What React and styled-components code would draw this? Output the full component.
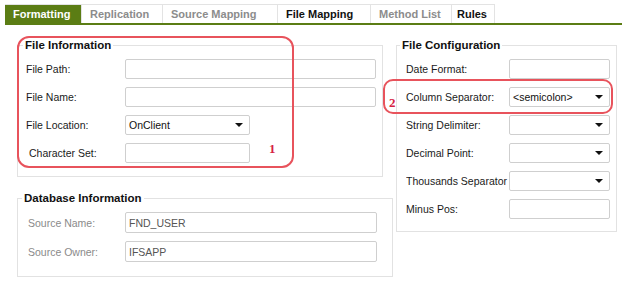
import React from 'react'
import styled, { createGlobalStyle } from 'styled-components'

const Global = createGlobalStyle`
  body {
    margin: 0;
    background: #ffffff;
    font-family: "Liberation Sans", Arial, sans-serif;
    font-size: 10.5px;
    color: #1a1a1a;
  }
`

const Page = styled.div`
  width: 622px;
  height: 283px;
  padding-top: 4px;
  box-sizing: border-box;
`

const TabBar = styled.div`
  display: flex;
  margin-left: 5px;
  border-bottom: 2px solid #5b7d14;
`

const Tab = styled.div`
  height: 19px;
  display: flex;
  align-items: center;
  padding: 0 ${p => p.pad || 8}px;
  box-sizing: border-box;
  font-weight: bold;
  font-size: 11px;
  border: 1px solid #e3e3e3;
  border-bottom: none;
  border-left: none;
  background: ${p => (p.active ? '#5b7d14' : '#ffffff')};
  color: ${p => (p.active ? '#ffffff' : p.dim ? '#8c8c8c' : '#111111')};
  width: ${p => p.w}px;
`

const Body = styled.div`
  display: flex;
  align-items: flex-start;
  padding-left: 17px;
  margin-top: 14px;
`

const LeftColumn = styled.div`
  width: 376px;
  display: flex;
  flex-direction: column;
  gap: 15px;
`

const Group = styled.fieldset`
  position: relative;
  margin: 0;
  width: ${p => p.w}px;
  box-sizing: border-box;
  border: 1px solid #e2e2e2;
  padding: ${p => p.pt || 7}px ${p => p.pr || 6}px ${p => p.pb || 13}px ${p => p.pl || 8}px;
  display: flex;
  flex-direction: column;
  gap: 8px;
`

const Legend = styled.legend`
  font-weight: bold;
  font-size: 11.5px;
  color: #111;
  padding: 0 2px;
  margin-left: ${p => p.ml}px;
  line-height: 13px;
`

const Row = styled.div`
  display: flex;
  align-items: center;
  height: ${p => p.h || 20}px;
`

const Label = styled.div`
  width: ${p => p.w}px;
  flex: none;
  padding-left: ${p => p.indent || 0}px;
  box-sizing: border-box;
  color: ${p => (p.dim ? '#8a8a8a' : '#1a1a1a')};
  white-space: nowrap;
  overflow: hidden;
`

const Field = styled.div`
  width: ${p => p.w}px;
  height: ${p => p.h || 20}px;
  box-sizing: border-box;
  border: 1px solid #cfcfcf;
  border-radius: 2px;
  background: #fff;
  display: flex;
  align-items: center;
  padding: 0 3px;
  color: ${p => (p.dim ? '#555' : '#111')};
`

const Value = styled.span`
  flex: 1;
`

const Arrow = styled.span`
  width: 0;
  height: 0;
  margin-right: 3px;
  border-left: 4px solid transparent;
  border-right: 4px solid transparent;
  border-top: 4px solid #111;
`

// red annotation frames drawn over the form
const Mark = styled.div`
  position: absolute;
  left: ${p => p.x}px;
  top: ${p => p.y}px;
  width: ${p => p.w}px;
  height: ${p => p.h}px;
  border: 2px solid #e8535c;
  border-radius: ${p => p.r}px;
  box-sizing: border-box;
  pointer-events: none;
`

const Number = styled.div`
  position: absolute;
  left: ${p => p.x}px;
  top: ${p => p.y}px;
  color: #d62244;
  font-weight: bold;
  font-size: 13px;
  font-family: "Liberation Serif", serif;
`

const RightGroup = styled(Group)`
  margin-left: 3px;
`

const Select = ({ w, value }) => (
  <Field w={w}>
    <Value>{value}</Value>
    <Arrow />
  </Field>
)

const App = () => (
  <Page>
    <Global />
    <TabBar>
      <Tab active w={77}>Formatting</Tab>
      <Tab dim w={81}>Replication</Tab>
      <Tab dim w={115}>Source Mapping</Tab>
      <Tab w={93}>File Mapping</Tab>
      <Tab dim w={81}>Method List</Tab>
      <Tab w={43} pad={5}>Rules</Tab>
    </TabBar>
    <Body>
      <LeftColumn>
        <Group w={366}>
          <Legend ml={-3}>File Information</Legend>
          <Row><Label w={99}>File Path:</Label><Field w={251} /></Row>
          <Row><Label w={99}>File Name:</Label><Field w={251} /></Row>
          <Row><Label w={99}>File Location:</Label><Select w={125} value="OnClient" /></Row>
          <Row><Label w={99} indent={3}>Character Set:</Label><Field w={125} /></Row>
          <Mark x={-1} y={-16} w={277} h={132} r={12} />
          <Number x={251} y={89}>1</Number>
        </Group>
        <Group w={376} pl={10} pb={14} pt={7}>
          <Legend ml={-6}>Database Information</Legend>
          <Row h={21}><Label w={97} dim>Source Name:</Label><Field w={252} h={21} dim>FND_USER</Field></Row>
          <Row h={21}><Label w={97} dim>Source Owner:</Label><Field w={252} h={21} dim>IFSAPP</Field></Row>
        </Group>
      </LeftColumn>
      <RightGroup w={221} pl={9} pr={6} pb={12}>
        <Legend ml={-6}>File Configuration</Legend>
        <Row><Label w={103}>Date Format:</Label><Field w={101} /></Row>
        <Row><Label w={103}>Column Separator:</Label><Select w={101} value="<semicolon>" /></Row>
        <Row><Label w={103}>String Delimiter:</Label><Select w={101} /></Row>
        <Row><Label w={103}>Decimal Point:</Label><Select w={101} /></Row>
        <Row><Label w={103}>Thousands Separator</Label><Select w={101} /></Row>
        <Row><Label w={103}>Minus Pos:</Label><Field w={101} /></Row>
        <Mark x={-14} y={27} w={230} h={35} r={10} />
        <Number x={-8} y={43}>2</Number>
      </RightGroup>
    </Body>
  </Page>
)

export default App
